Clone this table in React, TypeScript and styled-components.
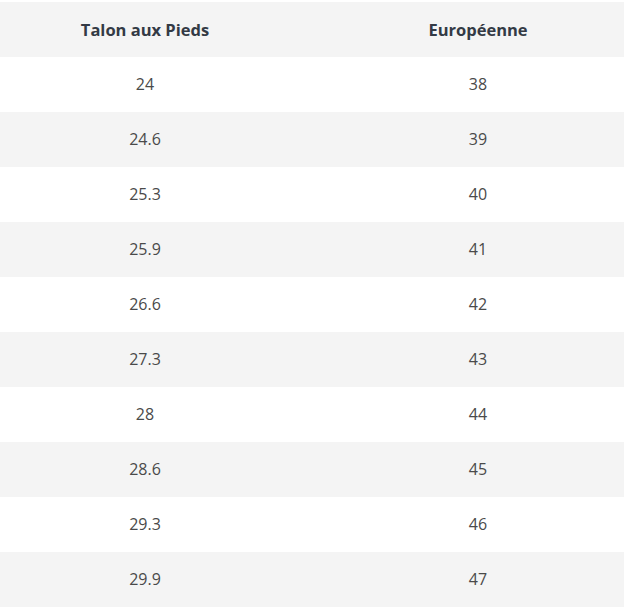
import React from "react";
import styled, { createGlobalStyle } from "styled-components";

const Global = createGlobalStyle`
  html, body { margin: 0; padding: 0; background: #fff; }
  body { font-family: "Open Sans", "Liberation Sans", sans-serif; }
`;

const Table = styled.div`
  margin-top: 2px;
  width: 624px;
  display: flex;
  flex-direction: column;
`;

const Row = styled.div<{ $shade: boolean }>`
  display: grid;
  grid-template-columns: 290px 1fr;
  height: 55px;
  align-items: center;
  padding-bottom: 1px;
  box-sizing: border-box;
  background: ${(p) => (p.$shade ? "#f4f4f4" : "#ffffff")};
`;

const Cell = styled.div<{ $second?: boolean; $head?: boolean }>`
  text-align: center;
  padding-left: ${(p) => (p.$second ? "42px" : "0")};
  font-size: ${(p) => (p.$head ? "16.5px" : "16px")};
  font-weight: ${(p) => (p.$head ? 700 : 400)};
  color: ${(p) => (p.$head ? "#333a45" : "#4a4a4a")};
`;

const rows: [string, string][] = [
  ["24", "38"],
  ["24.6", "39"],
  ["25.3", "40"],
  ["25.9", "41"],
  ["26.6", "42"],
  ["27.3", "43"],
  ["28", "44"],
  ["28.6", "45"],
  ["29.3", "46"],
  ["29.9", "47"],
];

export default function App() {
  return (
    <>
      <Global />
      <Table>
        <Row $shade>
          <Cell $head>Talon aux Pieds</Cell>
          <Cell $head $second>Européenne</Cell>
        </Row>
        {rows.map(([a, b], i) => (
          <Row key={a} $shade={i % 2 === 1}>
            <Cell>{a}</Cell>
            <Cell $second>{b}</Cell>
          </Row>
        ))}
      </Table>
    </>
  );
}
